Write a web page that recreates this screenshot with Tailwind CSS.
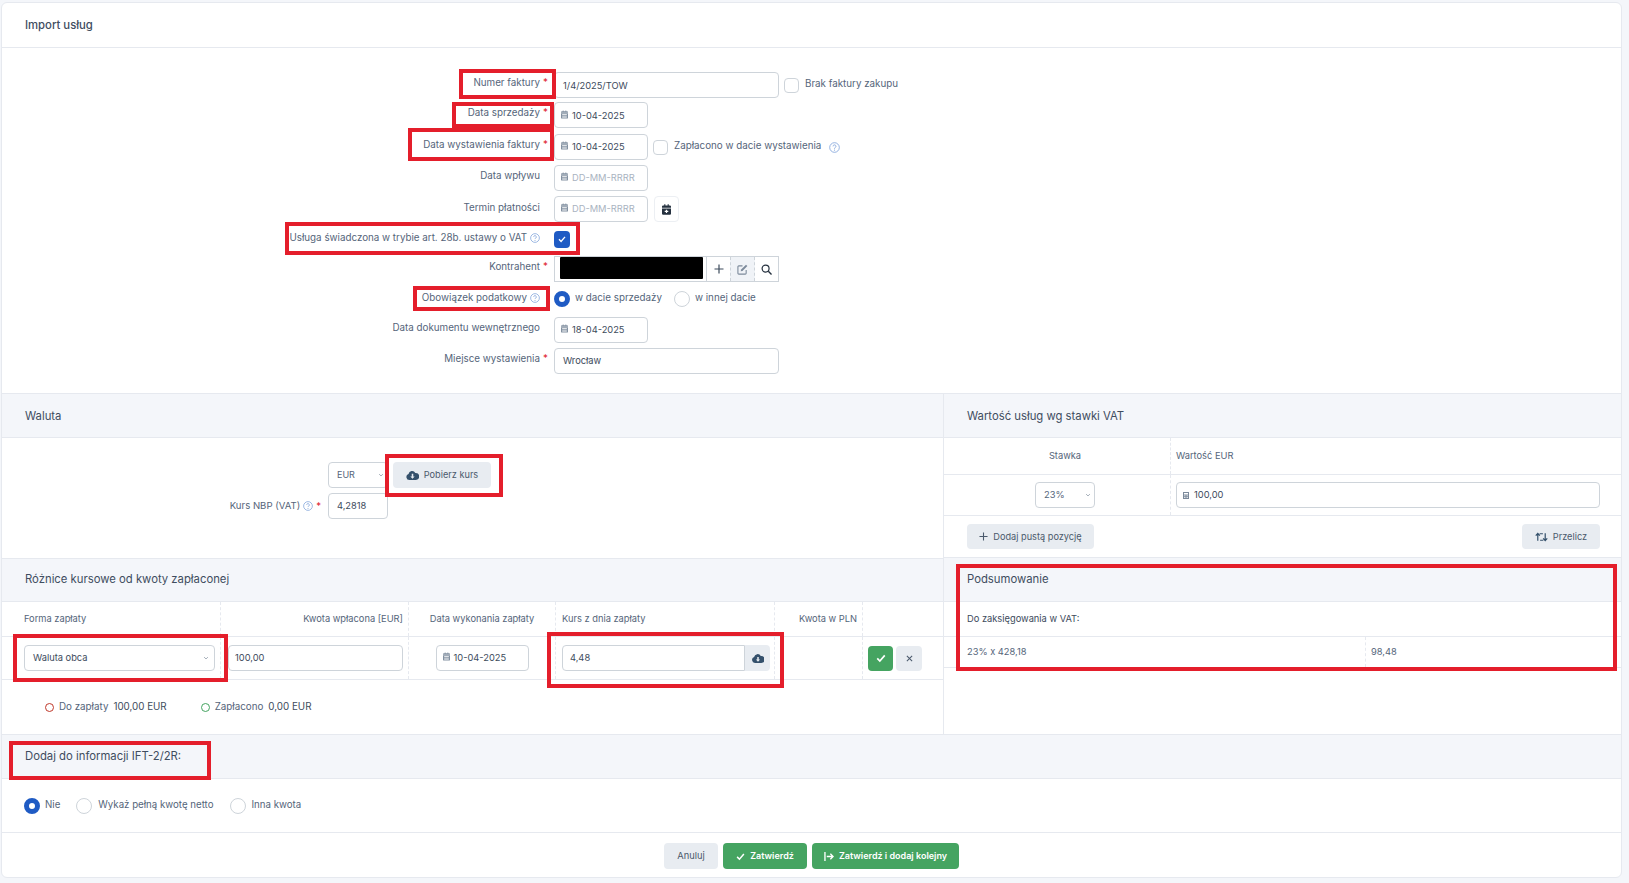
<!DOCTYPE html>
<html lang="pl">
<head>
  <meta charset="UTF-8" />
  <title>Import usług</title>
  <script src="https://cdn.jsdelivr.net/npm/@tailwindcss/browser@4"></script>
</head>
<body class="bg-[#f4f6fa] font-['Inter',sans-serif] text-[9.8px] text-[#55657a] w-[1629px] h-[883px] overflow-hidden">
  <!-- ikony -->
  <svg class="hidden">
    <symbol id="cal" viewBox="0 0 12 14"><path fill="currentColor" d="M3 0h1.400v1.600h3.200V0H9v1.600h1.500A1.500 1.500 0 0 1 12 3.100V4H0v-.9a1.500 1.500 0 0 1 1.500-1.500H3zM0 5h12v7.500a1.500 1.500 0 0 1-1.500 1.500h-9A1.500 1.500 0 0 1 0 12.500zm2 1.500v1.200h8V6.500zm0 2.600v1.200h8V9.100zm0 2.500v1h8v-1z"/></symbol>
    <symbol id="calplus" viewBox="0 0 12 14"><path fill="currentColor" d="M3 0h1.500v1.600h3V0H9v1.600h1.500A1.500 1.500 0 0 1 12 3.100V4.500H0V3.100a1.500 1.500 0 0 1 1.500-1.500H3zM0 5.500h12v7A1.500 1.500 0 0 1 10.500 14h-9A1.500 1.500 0 0 1 0 12.500zm5.200 1.700v1.600H3.600v1.400h1.600v1.600h1.600v-1.600h1.600V8.800H6.800V7.200z"/></symbol>
    <symbol id="help" viewBox="0 0 16 16"><circle cx="8" cy="8" r="7" fill="none" stroke="currentColor" stroke-width="1.200"/><path fill="none" stroke="currentColor" stroke-width="1.300" d="M5.900 6.300a2.100 2.100 0 1 1 3.200 1.800c-.7.400-1.100.8-1.100 1.600"/><circle cx="8" cy="11.800" r=".8" fill="currentColor"/></symbol>
    <symbol id="cloud" viewBox="0 0 16 13"><path fill="currentColor" fill-rule="evenodd" d="M4 13a4 4 0 0 1-1.200-7.800A4.800 4.800 0 0 1 11.700 3.800 4.600 4.600 0 0 1 12.500 13zM7 5v3.400H5.200L8 11.400l2.800-3H9V5z"/></symbol>
    <symbol id="chev" viewBox="0 0 8 8"><path fill="none" stroke="currentColor" stroke-width="1.200" d="M1.500 2.800 4 5.300l2.500-2.500"/></symbol>
    <symbol id="check" viewBox="0 0 12 12"><path fill="none" stroke="currentColor" stroke-width="2" d="M1.500 6.500 4.600 9.600 10.500 2.800"/></symbol>
  </svg>

  <div class="relative ml-[1px] mt-[2px] w-[1621px] h-[876px] bg-white rounded-md border border-[#e6e9ef] flex flex-col">
    <div class="h-[45px] shrink-0 border-b border-[#e6e9ef] pl-[23px] pt-[15px] text-[11.3px] leading-[14px] font-medium text-[#3f4d5f]">Import usług</div>

    <!-- dane faktury -->
    <div class="h-[345px] shrink-0 pt-[24px]">
      <div class="flex items-center h-[26px]">
        <div class="w-[538px] pb-[4px] text-right relative">Numer faktury<span class="absolute left-[541px] top-0 text-[#e0222e]">*</span></div>
        <div class="ml-[14px] w-[225px] h-[26px] border border-[#ced4da] rounded pl-[8px] pt-[1px] flex items-center text-[9.3px] text-[#3d4b5c]">1/4/2025/TOW</div>
        <div class="ml-[5px] w-[15px] h-[15px] border border-[#ced4da] rounded"></div>
        <div class="ml-[6px] pb-[1px]">Brak faktury zakupu</div>
      </div>
      <div class="flex items-center h-[26px] mt-[4px]">
        <div class="w-[538px] pb-[4px] text-right relative">Data sprzedaży<span class="absolute left-[541px] top-0 text-[#e0222e]">*</span></div>
        <div class="ml-[14px] w-[94px] h-[26px] border border-[#ced4da] rounded pl-[6px] pt-[1px] flex items-center text-[9.3px] text-[#3d4b5c]"><svg class="w-[7px] h-[9px] text-[#8391a1] mr-[4px] mb-[3px]"><use href="#cal"/></svg>10-04-2025</div>
      </div>
      <div class="flex items-center h-[26px] mt-[6px]">
        <div class="w-[538px] pb-[4px] text-right relative">Data wystawienia faktury<span class="absolute left-[541px] top-0 text-[#e0222e]">*</span></div>
        <div class="ml-[14px] w-[94px] h-[26px] border border-[#ced4da] rounded pl-[6px] flex items-center text-[9.3px] text-[#3d4b5c]"><svg class="w-[7px] h-[9px] text-[#8391a1] mr-[4px] mb-[3px]"><use href="#cal"/></svg>10-04-2025</div>
        <div class="ml-[5px] w-[15px] h-[15px] border border-[#ced4da] rounded"></div>
        <div class="ml-[6px] pb-[1px]">Zapłacono w dacie wystawienia</div>
        <svg class="ml-[8px] w-[11px] h-[11px] text-[#7fa3da]"><use href="#help"/></svg>
      </div>
      <div class="flex items-center h-[26px] mt-[5px]">
        <div class="w-[538px] pb-[3px] text-right">Data wpływu</div>
        <div class="ml-[14px] w-[94px] h-[26px] border border-[#ced4da] rounded pl-[6px] flex items-center text-[9.3px] text-[#a9b3bf]"><svg class="w-[7px] h-[9px] text-[#8391a1] mr-[4px] mb-[3px]"><use href="#cal"/></svg>DD-MM-RRRR</div>
      </div>
      <div class="flex items-center h-[26px] mt-[5px]">
        <div class="w-[538px] pb-[2px] text-right">Termin płatności</div>
        <div class="ml-[14px] w-[94px] h-[26px] border border-[#ced4da] rounded pl-[6px] flex items-center text-[9.3px] text-[#a9b3bf]"><svg class="w-[7px] h-[9px] text-[#8391a1] mr-[4px] mb-[3px]"><use href="#cal"/></svg>DD-MM-RRRR</div>
        <div class="ml-[6px] w-[25px] h-[26px] border border-[#eceff3] rounded flex items-center justify-center"><svg class="w-[9px] h-[11px] text-[#25313f]"><use href="#calplus"/></svg></div>
      </div>
      <div class="flex items-center h-[26px] mt-[4px]">
        <div class="w-[538px] pb-[2px] flex justify-end items-center">Usługa świadczona w trybie art. 28b. ustawy o VAT<svg class="ml-[3px] w-[10px] h-[10px] text-[#7fa3da]"><use href="#help"/></svg></div>
        <div class="ml-[14px] w-[16px] h-[17px] bg-[#1f5bc4] rounded flex items-center justify-center"><svg class="w-[8px] h-[8px] text-white"><use href="#check"/></svg></div>
      </div>
      <div class="flex items-center h-[26px] mt-[4px]">
        <div class="w-[538px] pb-[3px] text-right relative">Kontrahent<span class="absolute left-[541px] top-0 text-[#e0222e]">*</span></div>
        <div class="ml-[14px] w-[225px] h-[26px] border border-[#ced4da] flex">
          <div class="w-[151px] pl-[5px]"><div class="w-[143px] h-[22px] bg-black rounded-[1px]"></div></div>
          <div class="w-[24px] border-l border-[#ced4da] flex items-center justify-center"><svg class="w-[10px] h-[10px] text-[#3d4b5c]" viewBox="0 0 10 10"><path fill="none" stroke="currentColor" stroke-width="1.200" d="M5 .5v9M.5 5h9"/></svg></div>
          <div class="w-[25px] border-x border-dashed border-[#ced4da] bg-[#f0f3f7] flex items-center justify-center"><svg class="w-[11px] h-[11px] text-[#7c8a9b]" viewBox="0 0 12 12"><path fill="none" stroke="currentColor" stroke-width="1.200" d="M10 6.500V10a1 1 0 0 1-1 1H2a1 1 0 0 1-1-1V3a1 1 0 0 1 1-1h4"/><path fill="currentColor" d="M4.500 6 9.800.7l1.500 1.500L6 7.500l-2 .5z"/></svg></div>
          <div class="flex-1 flex items-center justify-center"><svg class="w-[11px] h-[11px] text-[#25313f]" viewBox="0 0 12 12"><circle cx="5" cy="5" r="3.800" fill="none" stroke="currentColor" stroke-width="1.300"/><path stroke="currentColor" stroke-width="1.500" d="m8 8 3.500 3.500"/></svg></div>
        </div>
      </div>
      <div class="flex items-center h-[26px] mt-[4px]">
        <div class="w-[538px] pb-[2px] flex justify-end items-center">Obowiązek podatkowy<svg class="ml-[3px] w-[10px] h-[10px] text-[#7fa3da]"><use href="#help"/></svg></div>
        <div class="ml-[14px] w-[16px] h-[16px] rounded-full border-[5px] border-[#1f5bc4] bg-white"></div>
        <div class="ml-[5px] pb-[1px]">w dacie sprzedaży</div>
        <div class="ml-[12px] w-[16px] h-[16px] rounded-full border border-[#ced4da]"></div>
        <div class="ml-[5px] pb-[1px]">w innej dacie</div>
      </div>
      <div class="flex items-center h-[26px] mt-[5px]">
        <div class="w-[538px] pb-[4px] text-right">Data dokumentu wewnętrznego</div>
        <div class="ml-[14px] w-[94px] h-[26px] border border-[#ced4da] rounded pl-[6px] flex items-center text-[9.3px] text-[#3d4b5c]"><svg class="w-[7px] h-[9px] text-[#8391a1] mr-[4px] mb-[3px]"><use href="#cal"/></svg>18-04-2025</div>
      </div>
      <div class="flex items-center h-[26px] mt-[5px]">
        <div class="w-[538px] pb-[4px] text-right relative">Miejsce wystawienia<span class="absolute left-[541px] top-0 text-[#e0222e]">*</span></div>
        <div class="ml-[14px] w-[225px] h-[26px] border border-[#ced4da] rounded pl-[8px] flex items-center text-[9.3px] text-[#3d4b5c]">Wrocław</div>
      </div>
    </div>

    <div class="flex h-[341px] shrink-0">
      <!-- lewa kolumna -->
      <div class="w-[942px] shrink-0 border-r border-[#e6e9ef]">
        <div class="h-[45px] bg-[#f4f6fa] border-y border-[#e6e9ef] pl-[23px] pt-[1px] flex items-center text-[11.3px] text-[#3f4d5f]">Waluta</div>
        <div class="h-[120px] pt-[24px]">
          <div class="flex items-center">
            <div class="ml-[326px] w-[60px] h-[26px] border border-[#ced4da] rounded pl-[8px] flex items-center justify-between pr-[3px] text-[9px]">EUR<svg class="w-[6px] h-[6px] text-[#9aa5b1]"><use href="#chev"/></svg></div>
            <div class="ml-[5px] w-[98px] h-[26px] rounded bg-[#e8ecf1] flex items-center justify-center text-[9.2px] text-[#4b5a6c]"><svg class="w-[13px] h-[10px] text-[#34506b] mr-[5px]"><use href="#cloud"/></svg>Pobierz kurs</div>
          </div>
          <div class="flex items-center mt-[5px]">
            <div class="w-[326px] flex justify-end items-center pr-[7px] text-[9.6px]">Kurs NBP (VAT)<svg class="mx-[3px] w-[10px] h-[10px] text-[#7fa3da]"><use href="#help"/></svg><span class="text-[#e0222e]">*</span></div>
            <div class="w-[60px] h-[26px] border border-[#ced4da] rounded pl-[8px] flex items-center text-[9.3px] text-[#3d4b5c]">4,2818</div>
          </div>
        </div>
        <div class="h-[44px] bg-[#f4f6fa] border-y border-[#e6e9ef] pl-[23px] pb-[1px] flex items-center text-[11.3px] text-[#3f4d5f]">Różnice kursowe od kwoty zapłaconej</div>
        <div class="flex h-[35px] border-b border-[#e6e9ef] items-center text-[9.3px]">
          <div class="w-[219px] h-full flex items-center pl-[22px] border-r border-dashed border-[#e6e9ef]">Forma zapłaty</div>
          <div class="w-[188px] h-full flex items-center justify-end pr-[5px] border-r border-dashed border-[#e6e9ef]">Kwota wpłacona [EUR]</div>
          <div class="w-[147px] h-full flex items-center justify-center border-r border-dashed border-[#e6e9ef]">Data wykonania zapłaty</div>
          <div class="w-[219px] h-full flex items-center pl-[6px] border-r border-dashed border-[#e6e9ef]">Kurs z dnia zapłaty</div>
          <div class="w-[88px] h-full flex items-center justify-end pr-[5px] border-r border-dashed border-[#e6e9ef]">Kwota w PLN</div>
        </div>
        <div class="flex h-[43px] border-b border-[#e6e9ef] items-center text-[9.3px]">
          <div class="w-[219px] h-full flex items-center pl-[22px] border-r border-dashed border-[#e6e9ef]"><div class="w-[191px] h-[26px] border border-[#ced4da] rounded pl-[8px] pr-[5px] flex items-center justify-between text-[#3d4b5c]">Waluta obca<svg class="w-[6px] h-[6px] text-[#9aa5b1]"><use href="#chev"/></svg></div></div>
          <div class="w-[188px] h-full flex items-center justify-end pr-[5px] border-r border-dashed border-[#e6e9ef]"><div class="w-[175px] h-[26px] border border-[#ced4da] rounded pl-[6px] flex items-center text-[#3d4b5c]">100,00</div></div>
          <div class="w-[147px] h-full flex items-center justify-center border-r border-dashed border-[#e6e9ef]"><div class="w-[93px] h-[26px] border border-[#ced4da] rounded pl-[6px] flex items-center text-[#3d4b5c]"><svg class="w-[7px] h-[9px] text-[#8391a1] mr-[4px] mb-[3px]"><use href="#cal"/></svg>10-04-2025</div></div>
          <div class="w-[219px] h-full flex items-center pl-[6px] border-r border-dashed border-[#e6e9ef]"><div class="w-[183px] h-[26px] border border-[#ced4da] rounded-l pl-[7px] flex items-center text-[#3d4b5c]">4,48</div><div class="w-[25px] h-[26px] bg-[#e8ecf1] rounded-r flex items-center justify-center"><svg class="w-[12px] h-[10px] text-[#34506b]"><use href="#cloud"/></svg></div></div>
          <div class="w-[88px] h-full border-r border-dashed border-[#e6e9ef]"></div>
          <div class="flex items-center ml-[5px] gap-[3px]">
            <div class="w-[25px] h-[25px] bg-[#45a461] rounded flex items-center justify-center"><svg class="w-[10px] h-[10px] text-white"><use href="#check"/></svg></div>
            <div class="w-[26px] h-[25px] bg-[#e8ecf1] rounded flex items-center justify-center"><svg class="w-[7px] h-[7px] text-[#4b5a6c]" viewBox="0 0 8 8"><path stroke="currentColor" stroke-width="1.200" d="m1 1 6 6M7 1 1 7"/></svg></div>
          </div>
        </div>
        <div class="flex items-center h-[53px] pl-[43px] pt-[1px] text-[9.8px]">
          <div class="w-[9px] h-[9px] rounded-full border-[1.5px] border-[#c0392b]"></div>
          <div class="ml-[5px]">Do zapłaty</div>
          <div class="ml-[5px] text-[#3d4b5c]">100,00 EUR</div>
          <div class="ml-[34px] w-[9px] h-[9px] rounded-full border-[1.5px] border-[#45a461]"></div>
          <div class="ml-[5px]">Zapłacono</div>
          <div class="ml-[5px] text-[#3d4b5c]">0,00 EUR</div>
        </div>
      </div>
      <!-- prawa kolumna -->
      <div class="flex-1">
        <div class="h-[45px] bg-[#f4f6fa] border-y border-[#e6e9ef] pl-[23px] pt-[1px] flex items-center text-[11.3px] text-[#3f4d5f]">Wartość usług wg stawki VAT</div>
        <div class="flex h-[37px] border-b border-[#e6e9ef] text-[9.3px]">
          <div class="w-[227px] h-full flex items-center justify-center pl-[16px] border-r border-dashed border-[#e6e9ef]">Stawka</div>
          <div class="flex-1 flex items-center pl-[5px]">Wartość EUR</div>
        </div>
        <div class="flex h-[41px] border-b border-[#e6e9ef] text-[9.3px]">
          <div class="w-[227px] h-full flex items-center justify-center pl-[16px] border-r border-dashed border-[#e6e9ef]"><div class="w-[60px] h-[26px] border border-[#ced4da] rounded pl-[8px] pr-[3px] flex items-center justify-between">23%<svg class="w-[6px] h-[6px] text-[#9aa5b1]"><use href="#chev"/></svg></div></div>
          <div class="flex-1 flex items-center pl-[5px]"><div class="w-[424px] h-[26px] border border-[#ced4da] rounded pl-[6px] flex items-center text-[#3d4b5c]"><svg class="w-[6px] h-[7px] text-[#7c8a9b] mr-[5px]" viewBox="0 0 6 7"><path fill="currentColor" fill-rule="evenodd" d="M0 0h6v7H0zm1 1v1.500h4V1zm0 2.500v.8h1v-.8zm1.500 0v.8h1v-.8zm1.500 0v.8h1v-.8zM1 5v.8h1V5zm1.500 0v.8h1V5zM4 5v.8h1V5z"/></svg>100,00</div></div>
        </div>
        <div class="flex h-[41px] items-center justify-between pl-[23px] pr-[21px] text-[9.2px]">
          <div class="w-[127px] h-[25px] rounded bg-[#e8ecf1] flex items-center justify-center text-[#4b5a6c]"><svg class="w-[9px] h-[9px] mr-[5px]" viewBox="0 0 10 10"><path fill="none" stroke="currentColor" stroke-width="1.200" d="M5 .5v9M.5 5h9"/></svg>Dodaj pustą pozycję</div>
          <div class="w-[78px] h-[25px] rounded bg-[#e8ecf1] flex items-center justify-center text-[#4b5a6c]"><svg class="w-[13px] h-[10px] mr-[5px] text-[#34506b]" viewBox="0 0 14 10"><path fill="none" stroke="currentColor" stroke-width="1.300" d="M3 9V1.500M.8 3.500 3 1.200l2.200 2.300M11 1v7.500M8.800 6.500 11 8.800l2.200-2.300M5.500 8.500H9M5 1.500h3.500"/></svg>Przelicz</div>
        </div>
        <div class="h-[45px] bg-[#f4f6fa] border-y border-[#e6e9ef] pl-[23px] flex items-center text-[11.3px] text-[#3f4d5f]">Podsumowanie</div>
        <div class="h-[35px] border-b border-[#e6e9ef] pl-[23px] flex items-center text-[9.3px] text-[#3d4b5c]">Do zaksięgowania w VAT:</div>
        <div class="flex h-[31px] border-b border-[#e6e9ef] text-[9.3px]">
          <div class="w-[422px] flex items-center pl-[23px] border-r border-dashed border-[#e6e9ef]">23% x 428,18</div>
          <div class="flex items-center pl-[5px]">98,48</div>
        </div>
      </div>
    </div>

    <div class="h-[45px] shrink-0 bg-[#f4f6fa] border-y border-[#e6e9ef] pl-[23px] flex items-center text-[11.3px] text-[#3f4d5f]">Dodaj do informacji IFT-2/2R:</div>
    <div class="h-[54px] shrink-0 border-b border-[#e6e9ef] flex items-center pl-[22px] text-[9.7px]">
      <div class="w-[16px] h-[16px] rounded-full border-[5px] border-[#1f5bc4] bg-white"></div>
      <div class="ml-[5px]">Nie</div>
      <div class="ml-[16px] w-[16px] h-[16px] rounded-full border border-[#ced4da]"></div>
      <div class="ml-[6px]">Wykaż pełną kwotę netto</div>
      <div class="ml-[16px] w-[16px] h-[16px] rounded-full border border-[#ced4da]"></div>
      <div class="ml-[6px]">Inna kwota</div>
    </div>
    <div class="flex-1 flex items-center justify-center gap-[5px] pt-[2px] text-[9px]">
      <div class="w-[54px] h-[26px] rounded bg-[#e8ecf1] flex items-center justify-center text-[#4b5a6c] text-[9.3px]">Anuluj</div>
      <div class="w-[84px] h-[26px] rounded bg-[#45a461] flex items-center justify-center text-white font-semibold"><svg class="w-[9px] h-[9px] mr-[5px]"><use href="#check"/></svg>Zatwierdź</div>
      <div class="w-[147px] h-[26px] rounded bg-[#45a461] flex items-center justify-center text-white font-semibold"><svg class="w-[10px] h-[9px] mr-[5px]" viewBox="0 0 11 10"><path fill="none" stroke="currentColor" stroke-width="1.500" d="M1 0v10M3 5h7M7 2l3 3-3 3"/></svg>Zatwierdź i dodaj kolejny</div>
    </div>

    <!-- czerwone ramki naniesione na zrzut -->
    <div class="absolute left-[457px] top-[66px] w-[97px] h-[30px] border-[4px] border-[#e41e2b]"></div>
    <div class="absolute left-[450px] top-[99px] w-[102px] h-[26px] border-[4px] border-[#e41e2b]"></div>
    <div class="absolute left-[406px] top-[125px] w-[146px] h-[33px] border-[4px] border-[#e41e2b]"></div>
    <div class="absolute left-[283px] top-[219px] w-[295px] h-[33px] border-[4px] border-[#e41e2b]"></div>
    <div class="absolute left-[411px] top-[283px] w-[137px] h-[25px] border-[4px] border-[#e41e2b]"></div>
    <div class="absolute left-[383px] top-[451px] w-[118px] h-[43px] border-[4px] border-[#e41e2b]"></div>
    <div class="absolute left-[11px] top-[631px] w-[215px] h-[48px] border-[4px] border-[#e41e2b]"></div>
    <div class="absolute left-[545px] top-[629px] w-[237px] h-[56px] border-[4px] border-[#e41e2b]"></div>
    <div class="absolute left-[954px] top-[561px] w-[661px] h-[107px] border-[4px] border-[#e41e2b]"></div>
    <div class="absolute left-[7px] top-[738px] w-[202px] h-[39px] border-[4px] border-[#e41e2b]"></div>
  </div>
</body>
</html>
